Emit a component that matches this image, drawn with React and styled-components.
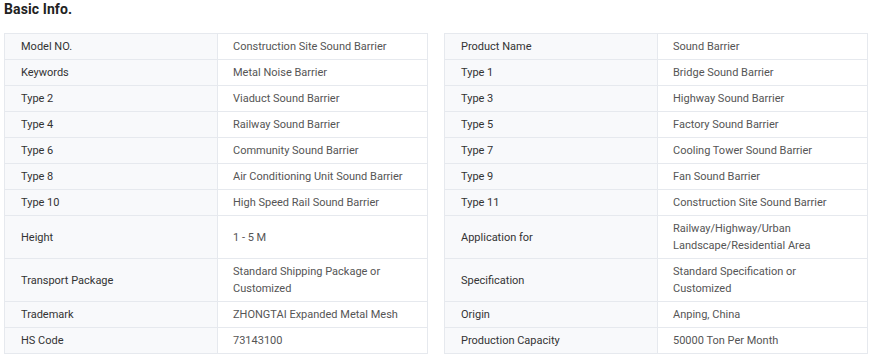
import React from "react";
import styled, { createGlobalStyle } from "styled-components";

const Global = createGlobalStyle`
  html, body { margin: 0; padding: 0; background: #fff; }
  body { font-family: Roboto, "Liberation Sans", Arial, sans-serif; }
`;

const Page = styled.div`
  padding: 0 4px;
  width: 864px;
`;

const Title = styled.h2`
  margin: 0;
  height: 33px;
  line-height: 18px;
  font-size: 14px;
  font-weight: 700;
  color: #222;
  letter-spacing: 0.1px;
`;

const Columns = styled.div`
  display: grid;
  grid-template-columns: 424px 424px;
  gap: 16px;
`;

const Table = styled.table`
  width: 100%;
  border-collapse: collapse;
  table-layout: fixed;
  font-size: 11px;
`;

const Row = styled.tr`
  height: ${(p) => (p.$tall ? "43px" : "26px")};
`;

const Label = styled.td`
  width: 196px;
  padding: 4px 0 4px 16px;
  line-height: 17px;
  color: #333;
  background: #f8f9fb;
  border: 1px solid #e6e9ee;
  vertical-align: middle;
`;

const Value = styled.td`
  padding: 4px 12px 4px 15px;
  line-height: 17px;
  color: #555;
  background: #fff;
  border: 1px solid #e6e9ee;
  vertical-align: middle;
`;

const left = [
  ["Model NO.", "Construction Site Sound Barrier"],
  ["Keywords", "Metal Noise Barrier"],
  ["Type 2", "Viaduct Sound Barrier"],
  ["Type 4", "Railway Sound Barrier"],
  ["Type 6", "Community Sound Barrier"],
  ["Type 8", "Air Conditioning Unit Sound Barrier"],
  ["Type 10", "High Speed Rail Sound Barrier"],
  ["Height", "1 - 5 M", true],
  ["Transport Package", "Standard Shipping Package or Customized", true],
  ["Trademark", "ZHONGTAI Expanded Metal Mesh"],
  ["HS Code", "73143100"],
];

const right = [
  ["Product Name", "Sound Barrier"],
  ["Type 1", "Bridge Sound Barrier"],
  ["Type 3", "Highway Sound Barrier"],
  ["Type 5", "Factory Sound Barrier"],
  ["Type 7", "Cooling Tower Sound Barrier"],
  ["Type 9", "Fan Sound Barrier"],
  ["Type 11", "Construction Site Sound Barrier"],
  ["Application for", "Railway/Highway/Urban Landscape/Residential Area", true],
  ["Specification", "Standard Specification or Customized", true],
  ["Origin", "Anping, China"],
  ["Production Capacity", "50000 Ton Per Month"],
];

function InfoTable({ rows }) {
  return (
    <Table>
      <tbody>
        {rows.map(([k, v, tall]) => (
          <Row key={k} $tall={tall}>
            <Label>{k}</Label>
            <Value>{v}</Value>
          </Row>
        ))}
      </tbody>
    </Table>
  );
}

export default function App() {
  return (
    <Page>
      <Global />
      <Title>Basic Info.</Title>
      <Columns>
        <InfoTable rows={left} />
        <InfoTable rows={right} />
      </Columns>
    </Page>
  );
}
